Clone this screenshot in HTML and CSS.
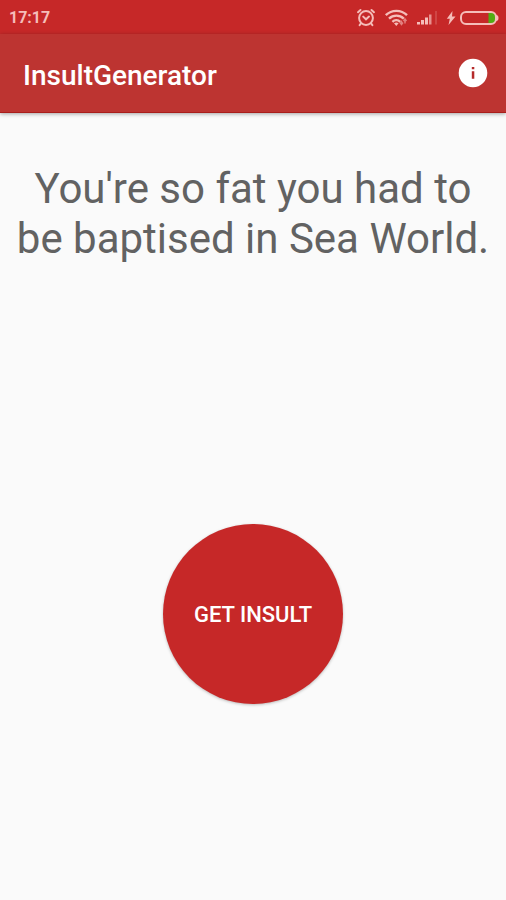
FILE: index.html
```html
<!DOCTYPE html>
<html lang="en">
<head>
<meta charset="utf-8">
<meta name="viewport" content="width=device-width, initial-scale=1">
<title>InsultGenerator</title>
<link rel="stylesheet" href="styles.css">
</head>
<body>
<div class="status-bar">
  <time class="clock">17:17</time>
  <div class="status-icons">
    <svg class="alarm" width="20" height="20" viewBox="0 0 20 20" fill="none" stroke="currentColor" stroke-width="2" stroke-linecap="round" aria-hidden="true">
      <circle cx="10" cy="10" r="6.9"/>
      <path d="M2 4.200 4.500 2M18 4.200 15.500 2M4.800 15.700 3.600 17.200M15.200 15.700l1.200 1.500M7.200 8.600l2.800 2.700 3-2.700"/>
    </svg>
    <svg class="wifi" width="24" height="18" viewBox="0 0 24 18" fill="none" stroke="currentColor" stroke-width="2.4" aria-hidden="true">
      <path d="M1.800 6.200C7.600 .4 17.200 .4 23 6.200M5 9.600c4.200-4 10.600-4 14.800 0M8.400 12.800c2.200-2.100 5.600-2.100 7.800 0"/>
      <path d="M10 14.300q2.300-1.600 4.600 0L12.300 17z" fill="currentColor" stroke="none"/>
      <path d="M17.500 15.500v-4M16 13.500l1.500 2 1.500-2M21 14.500v-4M19.500 12l1.500-2 1.500 2" stroke-width="1.400" opacity=".6"/>
    </svg>
    <svg class="signal" width="22" height="16" viewBox="0 0 22 16" fill="currentColor" aria-hidden="true">
      <path d="M1 12h3v2.500H1zM5 10h3v4.500H5zM9 7.500h3v7H9z"/>
      <path d="M13 4.500h2.500v10H13z" opacity=".7"/>
      <path d="M19 1h2v13.500h-2z" opacity=".2"/>
    </svg>
    <svg class="bolt" width="10" height="14" viewBox="0 0 10 14" fill="currentColor" aria-hidden="true">
      <path d="M6.500 0 .8 7.800h3L2.500 14 9.500 5.600H6z"/>
    </svg>
    <svg class="battery" width="39" height="14" viewBox="0 0 39 14" aria-hidden="true">
      <path d="M28.500 2h4.200q2.500 0 2.500 2.500v5q0 2.500-2.500 2.500h-4.200z" fill="#51ac12"/>
      <rect x="1" y="1" width="35" height="12" rx="5" fill="none" stroke="currentColor" stroke-width="2"/>
      <path d="M36 4q2.500 0 2.500 3T36 10z" fill="currentColor"/>
    </svg>
  </div>
</div>
<header class="app-bar">
  <h1 class="title">InsultGenerator</h1>
  <button class="info" type="button" aria-label="Info">
    <svg width="30" height="30" viewBox="0 0 30 30" aria-hidden="true">
      <circle cx="15" cy="15" r="14.300" fill="#fff"/>
      <path d="M13.800 9h2.500v2.300h-2.500zM13.800 13.200h2.500v7.500h-2.500z" fill="#b52a2a"/>
    </svg>
  </button>
</header>
<main class="content">
  <p class="insult">You're so fat you had to be baptised in Sea World.</p>
  <button class="generate" type="button">GET INSULT</button>
</main>
</body>
</html>
```

FILE: styles.css
```css
* {
  box-sizing: border-box;
}

body {
  margin: 0;
  min-height: 100vh;
  display: flex;
  flex-direction: column;
  background: #fafafa;
  color: #626262;
  font-family: Roboto, sans-serif;
}

.status-bar {
  display: flex;
  align-items: center;
  justify-content: space-between;
  height: 34px;
  padding: 1px 7px 0 9px;
  background: #c62828;
  color: #f5bdb9;
}

.clock {
  font-size: 16px;
  font-weight: 700;
  line-height: 20px;
}

.status-icons {
  display: flex;
  align-items: center;
  gap: 8px;
}

.bolt {
  margin-right: -4px;
}

.app-bar {
  display: flex;
  align-items: center;
  justify-content: space-between;
  height: 79px;
  padding: 0 18px 0 23px;
  background: #bd3431;
  border-bottom: 1px solid #a91e1b;
  box-shadow: 0 1px 4px rgba(0, 0, 0, 0.35);
}

.title {
  margin: 6px 0 0;
  color: #fff;
  font-size: 28px;
  font-weight: 500;
  line-height: 32px;
}

.info {
  display: flex;
  padding: 0;
  border: 0;
  border-radius: 50%;
  background: none;
  cursor: pointer;
}

.content {
  flex: 1;
  display: flex;
  flex-direction: column;
  align-items: center;
  justify-content: space-between;
  padding: 51px 12px 196px;
}

.insult {
  margin: 0;
  font-size: 42px;
  line-height: 50px;
  text-align: center;
}

.generate {
  width: 180px;
  height: 180px;
  padding: 0;
  border: 0;
  border-radius: 50%;
  background: #c62828;
  box-shadow: 0 1px 3px rgba(0, 0, 0, 0.25);
  color: #fff;
  font-family: inherit;
  font-size: 22px;
  font-weight: 500;
  cursor: pointer;
}
```
